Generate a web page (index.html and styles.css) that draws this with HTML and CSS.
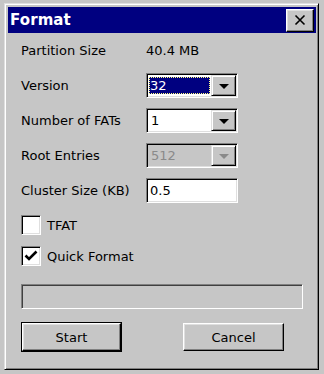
FILE: index.html
```html
<!DOCTYPE html>
<html>
<head>
<meta charset="utf-8">
<link rel="stylesheet" href="styles.css">
</head>
<body>
<div class="screen">
  <div class="dialog">
    <div class="titlebar">
      <span class="title">Format</span>
      <button class="close" aria-label="Close">
        <svg width="12" height="12" viewBox="0 0 12 12"><path d="M1.5 1.5 L10.5 10.5 M10.5 1.5 L1.5 10.5" stroke="#000" stroke-width="1.6" fill="none"/></svg>
      </button>
    </div>
    <div class="body">
      <div class="grid">
        <div class="label">Partition Size</div>
        <div class="value">40.4 MB</div>

        <div class="label">Version</div>
        <div class="combo">
          <div class="field"><span class="sel">32</span></div>
          <div class="drop"><span class="tri"></span></div>
        </div>

        <div class="label">Number of FATs</div>
        <div class="combo">
          <div class="field"><span class="txt">1</span></div>
          <div class="drop"><span class="tri"></span></div>
        </div>

        <div class="label">Root Entries</div>
        <div class="combo disabled">
          <div class="field"><span class="txt">512</span></div>
          <div class="drop"><span class="tri"></span></div>
        </div>

        <div class="label">Cluster Size (KB)</div>
        <div class="textbox"><span class="txt">0.5</span></div>
      </div>

      <div class="checks">
        <div class="check"><span class="box"></span><span class="clabel">TFAT</span></div>
        <div class="check"><span class="box"><svg width="14" height="12" viewBox="0 0 14 12"><path d="M1.5 5.5 L5 9 L12.5 1.5" stroke="#000" stroke-width="2.6" fill="none"/></svg></span><span class="clabel">Quick Format</span></div>
      </div>

      <div class="progress"></div>

      <div class="buttons">
        <div class="default"><button class="btn">Start</button></div>
        <button class="btn cancel">Cancel</button>
      </div>
    </div>
  </div>
</div>
</body>
</html>
```

FILE: styles.css
```css
html, body {
  margin: 0;
  padding: 0;
}
body {
  width: 324px;
  height: 374px;
  background: #c6c6c6;
  font-family: "DejaVu Sans", "Liberation Sans", sans-serif;
  font-size: 13px;
  color: #000;
  overflow: hidden;
}
.screen {
  padding: 3px 5px 0 4px;
}
.dialog {
  box-sizing: border-box;
  width: 315px;
  height: 367px;
  background: #c6c6c6;
  border: 1px solid;
  border-color: #dfdfdf #000 #000 #dfdfdf;
  box-shadow: inset 1px 1px #fff, inset -1px -1px #808080;
  padding: 3px 2px 2px 3px;
}
.titlebar {
  height: 26px;
  background: #000080;
  display: flex;
  align-items: center;
  justify-content: space-between;
  padding: 0 2px 0 2px;
}
.title {
  color: #fff;
  font-weight: bold;
  font-size: 15px;
  letter-spacing: 0.1px;
}
.close {
  box-sizing: border-box;
  width: 28px;
  height: 23px;
  padding: 0;
  margin: 0;
  background: #c6c6c6;
  border: 1px solid;
  border-color: #fff #000 #000 #fff;
  box-shadow: inset -1px -1px #808080, inset 1px 1px #dfdfdf;
  display: flex;
  align-items: center;
  justify-content: center;
}
.body {
  padding: 5px 0 0 13px;
}
.grid {
  display: grid;
  grid-template-columns: 125px 92px;
  grid-auto-rows: 25px;
  row-gap: 10px;
  align-items: center;
}
.label, .value {
  line-height: 25px;
}
.combo, .textbox {
  box-sizing: border-box;
  height: 25px;
  width: 92px;
  border: 1px solid;
  border-color: #808080 #fff #fff #808080;
  box-shadow: inset 1px 1px #000, inset -1px -1px #dfdfdf;
  padding: 1px;
  display: flex;
  background: #fff;
}
.field {
  flex: 1;
  display: flex;
  align-items: center;
  padding: 2px 1px 2px 1px;
  background: #fff;
}
.sel {
  box-sizing: border-box;
  flex: 1;
  height: 100%;
  background: #000080;
  color: #fff;
  border: 1px dotted #ffff80;
  display: flex;
  align-items: center;
  padding-left: 0;
}
.txt {
  padding-left: 2px;
  line-height: 19px;
}
.textbox {
  align-items: center;
}
.drop {
  box-sizing: border-box;
  width: 25px;
  height: 21px;
  background: #c6c6c6;
  border: 1px solid;
  border-color: #dfdfdf #000 #000 #dfdfdf;
  box-shadow: inset 1px 1px #fff, inset -1px -1px #808080;
  display: flex;
  align-items: center;
  justify-content: center;
}
.tri {
  width: 0;
  height: 0;
  border-left: 5px solid transparent;
  border-right: 5px solid transparent;
  border-top: 5px solid #000;
  margin-top: 1px;
}
.disabled {
  background: #c6c6c6;
}
.disabled .field {
  background: #c6c6c6;
  color: #8a8a8a;
}
.disabled .tri {
  border-top-color: #8a8a8a;
}
.checks {
  margin-top: 12px;
  display: flex;
  flex-direction: column;
  row-gap: 11px;
}
.check {
  display: flex;
  align-items: center;
  height: 20px;
}
.box {
  box-sizing: border-box;
  width: 20px;
  height: 20px;
  background: #fff;
  border: 1px solid;
  border-color: #808080 #fff #fff #808080;
  box-shadow: inset 1px 1px #000, inset -1px -1px #dfdfdf;
  display: flex;
  align-items: center;
  justify-content: center;
}
.clabel {
  margin-left: 6px;
}
.progress {
  box-sizing: border-box;
  margin-top: 18px;
  width: 282px;
  height: 25px;
  border: 1px solid;
  border-color: #808080 #fff #fff #808080;
  box-shadow: inset 1px 1px #404040;
}
.buttons {
  margin-top: 13px;
  display: flex;
  align-items: center;
  column-gap: 61px;
}
.default {
  box-sizing: border-box;
  border: 1px solid #000;
  width: 101px;
  height: 30px;
}
.btn {
  box-sizing: border-box;
  width: 99px;
  height: 28px;
  margin: 0;
  padding: 0;
  font-family: "DejaVu Sans", "Liberation Sans", sans-serif;
  font-size: 13px;
  color: #000;
  background: #c6c6c6;
  border: 1px solid;
  border-color: #fff #000 #000 #fff;
  box-shadow: inset -1px -1px #808080, inset 1px 1px #dfdfdf;
  display: block;
}
.cancel {
  width: 101px;
}
```
